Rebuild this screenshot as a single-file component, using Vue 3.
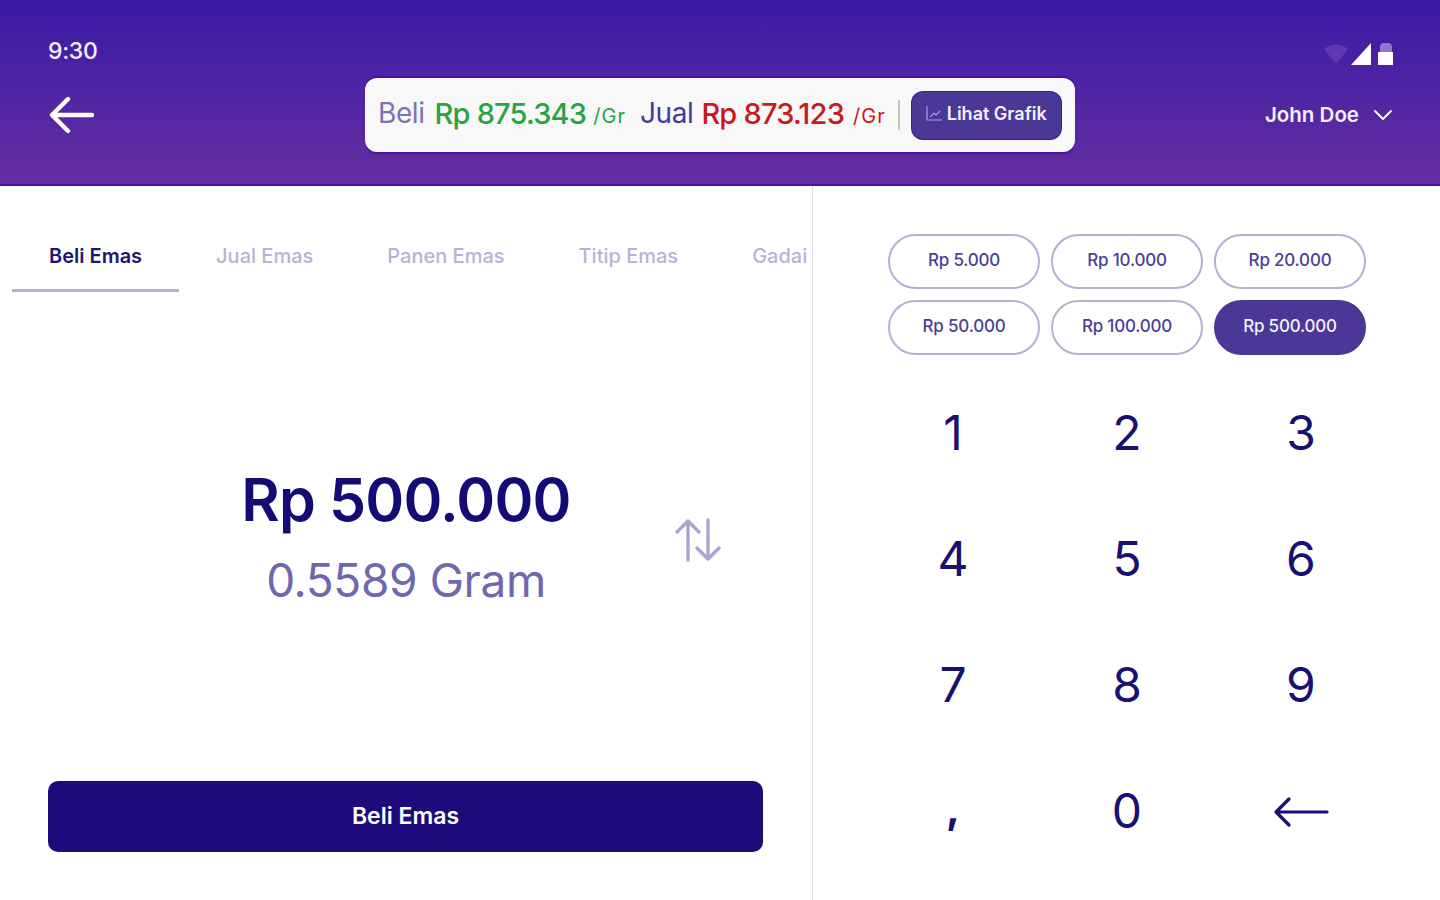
<script setup>
import { ref } from 'vue'

const tabs = ['Beli Emas', 'Jual Emas', 'Panen Emas', 'Titip Emas', 'Gadai']
const chips = ['Rp 5.000', 'Rp 10.000', 'Rp 20.000', 'Rp 50.000', 'Rp 100.000', 'Rp 500.000']
const keys = ['1', '2', '3', '4', '5', '6', '7', '8', '9', ',', '0']

const activeTab = ref(0)
const activeChip = ref(5)
</script>

<template>
  <div class="page">
    <header class="top">
      <div class="status">
        <span class="time">9:30</span>
        <svg class="status-icons" width="70" height="26" viewBox="0 0 70 26">
          <path d="M0 9 Q12 0 24 9 L12 24 Z" fill="#5f39b4" />
          <path d="M27 25 L47 3 V25 Z" fill="#fff" />
          <rect x="56" y="3" width="12" height="12" rx="4" fill="#8f78cc" />
          <rect x="54" y="12" width="15" height="13" fill="#fff" />
        </svg>
      </div>
      <div class="bar">
        <div class="bar-left">
          <svg class="back" width="46" height="38" viewBox="0 0 46 38" fill="none" stroke="#fff" stroke-width="4.4" stroke-linecap="round" stroke-linejoin="round">
            <path d="M43 19 H4 M19 3 L3 19 L19 35" />
          </svg>
        </div>
        <div class="price">
          <span class="lbl buy-lbl">Beli</span>
          <span class="val buy">Rp 875.343</span>
          <span class="unit buy">/Gr</span>
          <span class="lbl sell-lbl">Jual</span>
          <span class="val sell">Rp 873.123</span>
          <span class="unit sell">/Gr</span>
          <i class="sep"></i>
          <button class="graph">
            <svg width="16" height="15" viewBox="0 0 16 15" fill="none" stroke="#a99fd6" stroke-width="1.2">
              <path d="M1 0 V14 H16 M4 11 L8 7 L10 9 L14 5" />
            </svg>
            Lihat Grafik
          </button>
        </div>
        <div class="user">
          <span>John Doe</span>
          <svg width="20" height="12" viewBox="0 0 20 12" fill="none" stroke="#fff" stroke-width="1.8" stroke-linecap="round" stroke-linejoin="round">
            <path d="M2 2 L10 10 L18 2" />
          </svg>
        </div>
      </div>
    </header>

    <main class="body">
      <section class="left">
        <nav class="tabs">
          <div v-for="(t, i) in tabs" :key="t" class="tab" :class="{ on: i === activeTab }">{{ t }}</div>
        </nav>
        <div class="amount">
          <div class="figures">
            <div class="rp">Rp 500.000</div>
            <div class="gram">0.5589 Gram</div>
          </div>
          <svg class="swap" width="46" height="44" viewBox="0 0 46 44" fill="none" stroke="#a9a5d3" stroke-width="3.4" stroke-linecap="round" stroke-linejoin="round">
            <path d="M13 42 V3 M2 14 L13 3 L24 14 M33 2 V41 M22 30 L33 41 L44 30" />
          </svg>
        </div>
        <div class="action">
          <button class="cta">Beli Emas</button>
        </div>
      </section>

      <section class="right">
        <div class="chips">
          <button v-for="(c, i) in chips" :key="c" class="chip" :class="{ on: i === activeChip }">{{ c }}</button>
        </div>
        <div class="keys">
          <div v-for="k in keys" :key="k" class="key" :class="{ comma: k === ',' }">{{ k }}</div>
          <div class="key">
            <svg class="del" width="56" height="32" viewBox="0 0 56 32" fill="none" stroke="#1a1072" stroke-width="3.2" stroke-linecap="round" stroke-linejoin="round">
              <path d="M54 16 H3 M16 3 L3 16 L16 29" />
            </svg>
          </div>
        </div>
      </section>
    </main>
  </div>
</template>

<style>
html, body {
  margin: 0;
  background: #fff;
}
</style>

<style scoped>
.page {
  width: 1440px;
  height: 900px;
  overflow: hidden;
  display: flex;
  flex-direction: column;
  font-family: Inter, "Noto Sans", sans-serif;
  background: #fff;
}
button {
  font-family: inherit;
  cursor: pointer;
}

.top {
  height: 186px;
  box-sizing: border-box;
  padding: 37px 46px 0 48px;
  background: linear-gradient(180deg, #3a1ba5 0%, #652ea1 100%);
  border-bottom: 2px solid #4a12a0;
}
.status {
  height: 28px;
  display: flex;
  justify-content: space-between;
  align-items: center;
}
.time {
  color: #f0ecfa;
  font-size: 23px;
  font-weight: 500;
  letter-spacing: -0.3px;
}
.status-icons {
  margin-top: 4px;
}
.bar {
  margin-top: 13px;
  display: grid;
  grid-template-columns: 317px 710px 1fr;
  align-items: center;
}
.back {
  display: block;
  margin-left: 1px;
}
.price {
  height: 74px;
  box-sizing: border-box;
  padding: 0 14px 0 13px;
  border-radius: 12px;
  background: #f8f8f8;
  box-shadow: 0 -2px 0 #4a12a0, 0 2px 0 #4a12a0;
  display: flex;
  align-items: center;
  white-space: nowrap;
}
.lbl {
  margin-bottom: 4px;
  font-size: 28px;
  letter-spacing: -0.4px;
}
.buy-lbl {
  color: #7a74b0;
}
.sell-lbl {
  color: #46379f;
  margin-left: 14px;
}
.val {
  margin-left: 10px;
  margin-bottom: 4px;
  font-size: 29px;
  font-weight: 500;
  letter-spacing: -0.8px;
}
.val.sell {
  margin-left: 8px;
}
.unit {
  margin-left: 7px;
  margin-top: 1px;
  font-size: 20px;
  letter-spacing: 1px;
}
.unit.sell {
  margin-left: 9px;
}
.buy {
  color: #2aa344;
}
.sell {
  color: #c9191f;
}
.sep {
  width: 2px;
  height: 30px;
  margin: 0 12px;
  background: #c5c3d4;
}
.graph {
  width: 149px;
  height: 47px;
  padding: 0 0 4px;
  border: 0;
  border-radius: 11px;
  background: #4a3796;
  box-shadow: 0 0 0 1px #3b1da0;
  color: #f2f0fa;
  font-size: 18px;
  font-weight: 600;
  display: flex;
  align-items: center;
  justify-content: center;
  gap: 5px;
}
.user {
  display: flex;
  justify-content: flex-end;
  align-items: center;
  gap: 14px;
  margin-right: 1px;
  padding-bottom: 1px;
  color: #f3f0fb;
  font-size: 20.5px;
  font-weight: 600;
}

.body {
  flex: 1;
  display: flex;
  min-height: 0;
}
.left {
  width: 813px;
  box-sizing: border-box;
  border-right: 1px solid #dedde8;
  display: flex;
  flex-direction: column;
}
.tabs {
  margin-top: 42px;
  padding-left: 12px;
  display: flex;
  overflow: hidden;
  margin-right: 4px;
}
.tab {
  flex: none;
  padding: 17px 37px 21px;
  font-size: 20px;
  font-weight: 500;
  color: #b6b3d6;
  border-bottom: 3px solid transparent;
  line-height: 23px;
}
.tab.on {
  color: #1e1475;
  font-weight: 600;
  border-bottom-color: #b5b2d3;
}
.amount {
  height: 489px;
  display: flex;
  align-items: center;
  position: relative;
}
.figures {
  width: 812px;
  margin-top: -1px;
  text-align: center;
}
.rp {
  color: #150b74;
  font-size: 59px;
  font-weight: 600;
  line-height: 70px;
  letter-spacing: -0.8px;
}
.gram {
  margin-top: 17px;
  color: #6f68ae;
  font-size: 46px;
  line-height: 56px;
  letter-spacing: -0.4px;
}
.swap {
  position: absolute;
  left: 675px;
  top: 226px;
}
.action {
  padding: 0 49px 0 48px;
}
.cta {
  width: 100%;
  height: 71px;
  padding: 0 0 2px;
  border: 0;
  border-radius: 10px;
  background: #1f0a7b;
  color: #fff;
  font-size: 23px;
  font-weight: 600;
}

.right {
  flex: 1;
  padding: 48px 0 0 53px;
}
.chips {
  width: 478px;
  margin-left: 22px;
  display: grid;
  grid-template-columns: repeat(3, 152px);
  grid-auto-rows: 55px;
  column-gap: 11px;
  row-gap: 11px;
}
.chip {
  padding: 0 0 3px;
  border: 2px solid #b4b0d2;
  border-radius: 28px;
  background: #fff;
  color: #4a3f96;
  font-size: 17px;
  font-weight: 500;
  letter-spacing: -0.2px;
}
.chip.on {
  border-color: #4a3796;
  background: #4a3796;
  color: #f2f0fa;
}
.keys {
  width: 522px;
  margin-top: 14px;
  display: grid;
  grid-template-columns: repeat(3, 174px);
  grid-auto-rows: 126px;
}
.key {
  display: flex;
  align-items: center;
  justify-content: center;
  color: #1a1072;
  font-size: 48px;
}
.key.comma {
  padding-bottom: 5px;
  box-sizing: border-box;
  font-size: 42px;
  font-weight: 700;
}
.del {
  margin-top: 3px;
}
</style>
